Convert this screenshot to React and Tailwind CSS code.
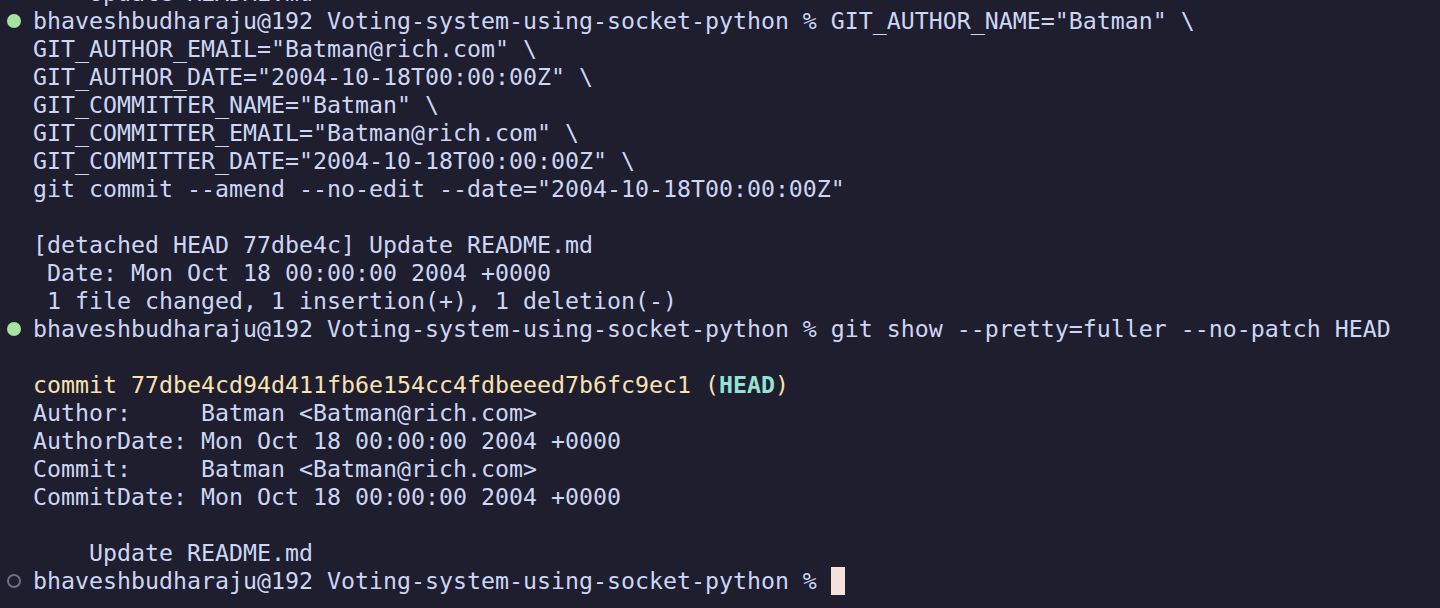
import React from "react";

const mono = { fontFamily: '"DejaVu Sans Mono", "Liberation Mono", monospace' };

const PROMPT = "bhaveshbudharaju@192 Voting-system-using-socket-python % ";

const lines = [
  { text: "    Update README.md" },
  { mark: "ok", text: PROMPT + 'GIT_AUTHOR_NAME="Batman" \\' },
  { text: 'GIT_AUTHOR_EMAIL="Batman@rich.com" \\' },
  { text: 'GIT_AUTHOR_DATE="2004-10-18T00:00:00Z" \\' },
  { text: 'GIT_COMMITTER_NAME="Batman" \\' },
  { text: 'GIT_COMMITTER_EMAIL="Batman@rich.com" \\' },
  { text: 'GIT_COMMITTER_DATE="2004-10-18T00:00:00Z" \\' },
  { text: 'git commit --amend --no-edit --date="2004-10-18T00:00:00Z"' },
  { text: "" },
  { text: "[detached HEAD 77dbe4c] Update README.md" },
  { text: " Date: Mon Oct 18 00:00:00 2004 +0000" },
  { text: " 1 file changed, 1 insertion(+), 1 deletion(-)" },
  { mark: "ok", text: PROMPT + "git show --pretty=fuller --no-patch HEAD" },
  { text: "" },
  { commit: true },
  { text: "Author:     Batman <Batman@rich.com>" },
  { text: "AuthorDate: Mon Oct 18 00:00:00 2004 +0000" },
  { text: "Commit:     Batman <Batman@rich.com>" },
  { text: "CommitDate: Mon Oct 18 00:00:00 2004 +0000" },
  { text: "" },
  { text: "    Update README.md" },
  { mark: "idle", text: PROMPT, cursor: true },
];

const Marker = ({ type }) => {
  if (type === "ok") {
    return <span className="block h-[14px] w-[14px] rounded-full bg-[#a6e3a1]" />;
  }
  if (type === "idle") {
    return <span className="block h-[14px] w-[14px] rounded-full border-2 border-[#6c7086]" />;
  }
  return null;
};

const Line = ({ line }) => (
  <div className="flex h-[28px] items-center">
    <div className="flex w-[33px] shrink-0 items-center justify-center pr-[5px]">
      <Marker type={line.mark} />
    </div>
    {line.commit ? (
      <pre className="whitespace-pre text-[#f9e2af]" style={mono}>
        commit 77dbe4cd94d411fb6e154cc4fdbeeed7b6fc9ec1 (
        <span className="font-bold text-[#94e2d5]">HEAD</span>)
      </pre>
    ) : (
      <pre className="flex items-center whitespace-pre text-[#cdd6f4]" style={mono}>
        {line.text}
        {line.cursor && <span className="inline-block h-[28px] w-[14px] bg-[#f5e0dc]" />}
      </pre>
    )}
  </div>
);

export default function App() {
  return (
    <div className="h-[608px] w-full overflow-hidden bg-[#1e1e2e] text-[23.25px] leading-[28px]" style={mono}>
      <div className="mt-[-21px]">
        {lines.map((line, i) => (
          <Line key={i} line={line} />
        ))}
      </div>
    </div>
  );
}
